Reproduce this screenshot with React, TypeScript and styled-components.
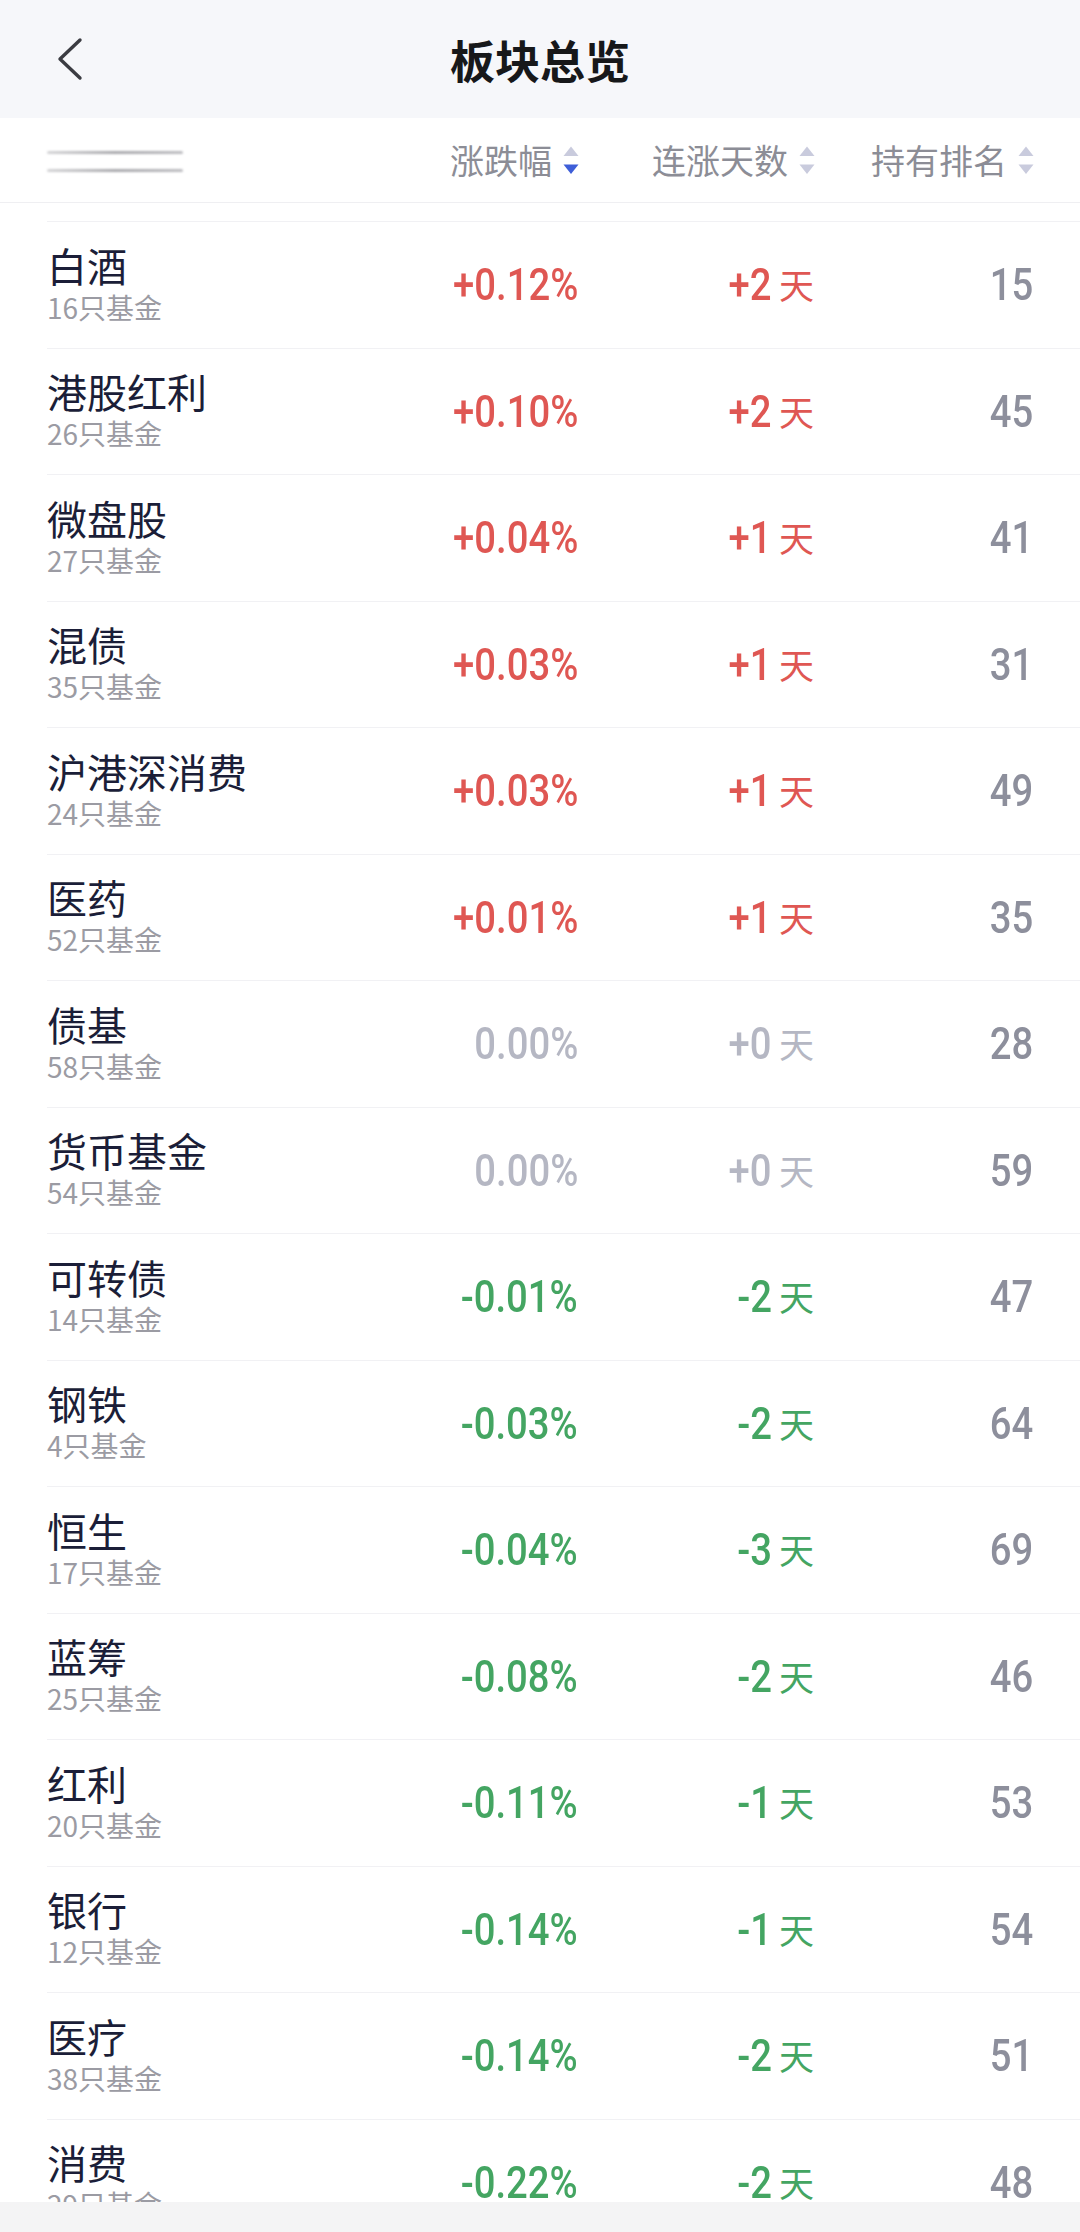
import React from "react";
import styled, { createGlobalStyle } from "styled-components";

const GlobalStyle = createGlobalStyle`
  html, body {
    margin: 0;
    padding: 0;
    background: #ffffff;
    width: 1080px;
    height: 2232px;
    overflow: hidden;
    font-family: "Noto Sans CJK SC", "Noto Sans", sans-serif;
  }
  * { box-sizing: border-box; }
`;

const Page = styled.div`
  width: 1080px;
  height: 2232px;
  overflow: hidden;
  background: #ffffff;
`;

const NavBar = styled.header`
  height: 118px;
  background: #f6f7fa;
  display: grid;
  grid-template-columns: 1fr auto 1fr;
  align-items: center;
`;

const BackButton = styled.div`
  padding-left: 56px;
  display: flex;
  align-items: center;
  height: 100%;
`;

const Title = styled.h1`
  margin: 0;
  font-family: "Noto Sans CJK SC", sans-serif;
  font-size: 45px;
  font-weight: 700;
  color: #17181a;
  line-height: 1;
`;

const HeaderRow = styled.div`
  height: 85px;
  display: grid;
  grid-template-columns: 1fr 236px 236px 219px;
  align-items: center;
  padding: 0 46px 0 47px;
  border-bottom: 1px solid #efeff2;
`;

const Redacted = styled.div`
  display: flex;
  flex-direction: column;
  gap: 15px;
  width: 136px;
  padding-top: 2px;
`;

const RedactedLine = styled.div`
  height: 3px;
  background: linear-gradient(90deg, #d4d4d6, #a9a9ad 50%, #bdbdc1);
  filter: blur(1px);
  border-radius: 2px;
`;

const HeaderCell = styled.div`
  display: flex;
  justify-content: flex-end;
  align-items: center;
  gap: 11px;
  font-size: 34px;
  color: #8c8d96;
  line-height: 1;
`;

const List = styled.div`
  padding-top: 18px;
`;

const Row = styled.div`
  margin-left: 47px;
  padding-right: 47px;
  height: 126.5px;
  border-top: 1px solid #f1f1f4;
  display: grid;
  grid-template-columns: 1fr 236px 236px 219px;
  align-items: center;
`;

const NameBlock = styled.div`
  display: flex;
  flex-direction: column;
  padding-bottom: 4px;
`;

const Name = styled.div`
  font-size: 40px;
  line-height: 48px;
  color: #1b1e38;
`;

const Sub = styled.div`
  font-size: 28px;
  line-height: 36px;
  color: #9b9ba3;
`;

type Tone = "up" | "down" | "flat";

const toneColor = (t: Tone) =>
  t === "up" ? "#df5753" : t === "down" ? "#44a562" : "#b5b7c3";

const NumCell = styled.div<{ $tone: Tone }>`
  display: flex;
  justify-content: flex-end;
  align-items: center;
  color: ${(p) => toneColor(p.$tone)};
`;

const Digits = styled.span`
  display: inline-block;
  font-family: Roboto, "Liberation Sans", sans-serif;
  font-size: 45px;
  font-weight: 500;
  line-height: 1;
  transform: scaleX(0.85);
  transform-origin: right center;
`;

const DayUnit = styled.span`
  font-family: "Noto Sans CJK SC", sans-serif;
  font-size: 35px;
  line-height: 1;
  margin-left: 7px;
  padding-bottom: 2px;
`;

const Rank = styled.div`
  display: flex;
  justify-content: flex-end;
  color: #8d8f9c;
`;

const BottomBar = styled.div`
  position: fixed;
  left: 0;
  right: 0;
  bottom: 0;
  height: 30px;
  background: #f4f4f5;
`;

const BackIcon = () => (
  <svg width="30" height="44" viewBox="0 0 30 44" fill="none">
    <polyline
      points="24,3 4,22 24,41"
      stroke="#3b3c42"
      strokeWidth="3.4"
      strokeLinecap="round"
      strokeLinejoin="round"
    />
  </svg>
);

const SortIcon = ({ active }: { active?: boolean }) => (
  <svg width="16" height="29" viewBox="0 0 16 29">
    <polygon points="0.5,10 8,0.5 15.5,10" fill="#c9cbdd" />
    <polygon points="0.5,18.5 15.5,18.5 8,28" fill={active ? "#3e5ed8" : "#c9cbdd"} />
  </svg>
);

type Item = {
  name: string;
  count: number;
  pct: string;
  days: string;
  rank: number;
  tone: Tone;
};

const data: Item[] = [
  { name: "白酒", count: 16, pct: "+0.12%", days: "+2", rank: 15, tone: "up" },
  { name: "港股红利", count: 26, pct: "+0.10%", days: "+2", rank: 45, tone: "up" },
  { name: "微盘股", count: 27, pct: "+0.04%", days: "+1", rank: 41, tone: "up" },
  { name: "混债", count: 35, pct: "+0.03%", days: "+1", rank: 31, tone: "up" },
  { name: "沪港深消费", count: 24, pct: "+0.03%", days: "+1", rank: 49, tone: "up" },
  { name: "医药", count: 52, pct: "+0.01%", days: "+1", rank: 35, tone: "up" },
  { name: "债基", count: 58, pct: "0.00%", days: "+0", rank: 28, tone: "flat" },
  { name: "货币基金", count: 54, pct: "0.00%", days: "+0", rank: 59, tone: "flat" },
  { name: "可转债", count: 14, pct: "-0.01%", days: "-2", rank: 47, tone: "down" },
  { name: "钢铁", count: 4, pct: "-0.03%", days: "-2", rank: 64, tone: "down" },
  { name: "恒生", count: 17, pct: "-0.04%", days: "-3", rank: 69, tone: "down" },
  { name: "蓝筹", count: 25, pct: "-0.08%", days: "-2", rank: 46, tone: "down" },
  { name: "红利", count: 20, pct: "-0.11%", days: "-1", rank: 53, tone: "down" },
  { name: "银行", count: 12, pct: "-0.14%", days: "-1", rank: 54, tone: "down" },
  { name: "医疗", count: 38, pct: "-0.14%", days: "-2", rank: 51, tone: "down" },
  { name: "消费", count: 29, pct: "-0.22%", days: "-2", rank: 48, tone: "down" },
];

export default function App() {
  return (
    <Page>
      <GlobalStyle />
      <NavBar>
        <BackButton>
          <BackIcon />
        </BackButton>
        <Title>板块总览</Title>
        <div />
      </NavBar>
      <HeaderRow>
        <Redacted>
          <RedactedLine />
          <RedactedLine />
        </Redacted>
        <HeaderCell>
          涨跌幅
          <SortIcon active />
        </HeaderCell>
        <HeaderCell>
          连涨天数
          <SortIcon />
        </HeaderCell>
        <HeaderCell>
          持有排名
          <SortIcon />
        </HeaderCell>
      </HeaderRow>
      <List>
        {data.map((d) => (
          <Row key={d.name}>
            <NameBlock>
              <Name>{d.name}</Name>
              <Sub>{d.count}只基金</Sub>
            </NameBlock>
            <NumCell $tone={d.tone}>
              <Digits>{d.pct}</Digits>
            </NumCell>
            <NumCell $tone={d.tone}>
              <Digits>{d.days}</Digits>
              <DayUnit>天</DayUnit>
            </NumCell>
            <Rank>
              <Digits>{d.rank}</Digits>
            </Rank>
          </Row>
        ))}
      </List>
      <BottomBar />
    </Page>
  );
}
